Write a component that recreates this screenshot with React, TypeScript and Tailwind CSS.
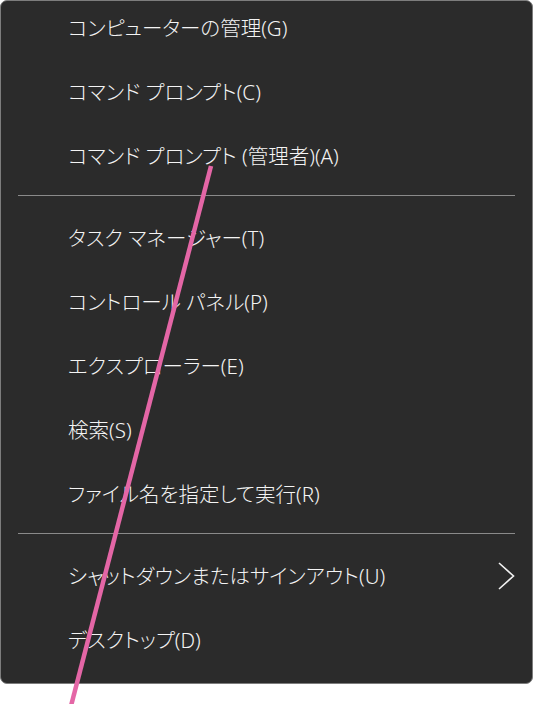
import React from "react";

type Item = { label: string; submenu?: boolean };

const groups: Item[][] = [
    [
        { label: "コンピューターの管理(G)" },
        { label: "コマンド プロンプト(C)" },
        { label: "コマンド プロンプト (管理者)(A)" }
    ],
    [
        { label: "タスク マネージャー(T)" },
        { label: "コントロール パネル(P)" },
        { label: "エクスプローラー(E)" },
        { label: "検索(S)" },
        { label: "ファイル名を指定して実行(R)" }
    ],
    [{ label: "シャットダウンまたはサインアウト(U)", submenu: true }, { label: "デスクトップ(D)" }]
];

function MenuItem({ item }: { item: Item }) {
    return (
        <div className="flex h-16 items-center justify-between pb-[10px] pl-[67px] pr-[17px]">
            <span className="whitespace-nowrap text-[20.5px] font-light leading-none text-[#f4f4f4] [font-feature-settings:'palt']">
                {item.label}
            </span>
            {item.submenu ? (
                <svg width="17" height="28" viewBox="0 0 17 28">
                    <polyline points="1,1 15.5,14 1,27" fill="none" stroke="#f2f2f2" strokeWidth="1.6" />
                </svg>
            ) : null}
        </div>
    );
}

export default function App() {
    return (
        <div className="relative h-[704px] w-[534px] overflow-hidden bg-white font-['Noto_Sans','Noto_Sans_CJK_JP',sans-serif]">
            <div className="w-[533px] rounded-[7px] border border-[#7d7d7d] bg-[#2b2b2b] pb-[6px]">
                {groups.map((group, gi) => (
                    <div key={gi}>
                        {gi > 0 ? <div className="mx-[17px] mb-[15px] mt-[2px] h-px bg-[#8a8a8a]" /> : null}
                        {group.map((item) => (
                            <MenuItem key={item.label} item={item} />
                        ))}
                    </div>
                ))}
            </div>

            {/* pink annotation stroke */}
            <svg className="pointer-events-none absolute inset-0" width="534" height="704" viewBox="0 0 534 704">
                <line x1="211" y1="166" x2="71" y2="706" stroke="#e466a6" strokeWidth="4.5" />
            </svg>
        </div>
    );
}
